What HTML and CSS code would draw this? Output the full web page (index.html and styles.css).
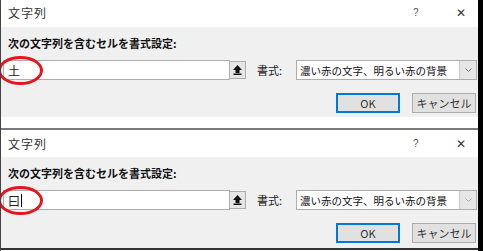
FILE: index.html
```html
<!doctype html>
<html>
<head>
<meta charset="utf-8">
<link rel="stylesheet" href="styles.css">
<title>文字列</title>
</head>
<body>
<div class="shot">

<div class="dialog first">
  <div class="titlebar">
    <span class="title">文字列</span>
    <span class="help">?</span>
    <span class="close">&#x2715;</span>
  </div>
  <div class="panel">
    <p class="label">次の文字列を含むセルを書式設定:</p>
    <div class="row">
      <div class="input"><span class="value">土</span></div>
      <div class="pick"><svg width="9" height="10" viewBox="0 0 9 10"><path d="M4.5 0 L9 5 H6.5 V8 H2.5 V5 H0 Z" fill="#111"/><rect x="0.5" y="8.5" width="8" height="1.5" fill="#111"/></svg></div>
      <span class="fmt">書式:</span>
      <div class="select">
        <span class="sel-text">濃い赤の文字、明るい赤の背景</span>
        <span class="arrow"><svg width="7" height="4" viewBox="0 0 7 4"><path d="M0.5 0.5 L3.5 3.5 L6.5 0.5" fill="none" stroke="#777" stroke-width="1"/></svg></span>
      </div>
    </div>
    <div class="buttons">
      <button class="btn default">OK</button>
      <button class="btn">キャンセル</button>
    </div>
    <div class="mark"></div>
  </div>
</div>

<div class="gap"></div>

<div class="dialog second">
  <div class="titlebar">
    <span class="title">文字列</span>
    <span class="help">?</span>
    <span class="close">&#x2715;</span>
  </div>
  <div class="panel">
    <p class="label">次の文字列を含むセルを書式設定:</p>
    <div class="row">
      <div class="input"><span class="value">曰</span><span class="caret"></span></div>
      <div class="pick"><svg width="9" height="10" viewBox="0 0 9 10"><path d="M4.5 0 L9 5 H6.5 V8 H2.5 V5 H0 Z" fill="#111"/><rect x="0.5" y="8.5" width="8" height="1.5" fill="#111"/></svg></div>
      <span class="fmt">書式:</span>
      <div class="select">
        <span class="sel-text">濃い赤の文字、明るい赤の背景</span>
        <span class="arrow"><svg width="7" height="4" viewBox="0 0 7 4"><path d="M0.5 0.5 L3.5 3.5 L6.5 0.5" fill="none" stroke="#aaa" stroke-width="1"/></svg></span>
      </div>
    </div>
    <div class="buttons">
      <button class="btn default">OK</button>
      <button class="btn">キャンセル</button>
    </div>
    <div class="mark"></div>
  </div>
</div>

</div>
</body>
</html>
```

FILE: styles.css
```css
html,
body {
    margin: 0;
    padding: 0;
    background: #fff;
}
body {
    font-family: "Noto Sans CJK JP", "Liberation Sans", sans-serif;
    font-size: 11px;
    color: #222;
}
p {
    margin: 0;
}
.shot {
    width: 483px;
    height: 251px;
    box-sizing: border-box;
    border-right: 5px solid #000;
    border-left: 1px solid #444;
    overflow: hidden;
}
.dialog {
    background: #fff;
}
.first {
    margin-top: -2px;
}
.second {
    border-top: 2px solid #7a7a7a;
    border-bottom: 2px solid #333;
}
.gap {
    height: 11px;
    background: #fff;
}
.titlebar {
    height: 27px;
    display: flex;
    align-items: center;
    padding-left: 7px;
    background: #fff;
}
.first .titlebar {
    height: 29px;
}
.title {
    font-size: 12px;
    color: #333;
    flex: 1;
    letter-spacing: 1px;
}
.help {
    font-family: "Liberation Sans", sans-serif;
    font-size: 10px;
    color: #555;
    width: 43px;
}
.close {
    font-family: "DejaVu Sans", sans-serif;
    font-size: 12px;
    color: #333;
    width: 22px;
}
.panel {
    position: relative;
    background: #f0f0f0;
    height: 90px;
    padding: 8px 0 0 2px;
    box-sizing: border-box;
}
.second .panel {
    height: 91px;
}
.label {
    font-weight: bold;
    font-size: 11px;
    line-height: 16px;
    padding-left: 5px;
    color: #111;
}
.row {
    display: flex;
    align-items: center;
    margin-top: 9px;
    height: 20px;
}
.input {
    width: 227px;
    height: 20px;
    box-sizing: border-box;
    border: 1px solid #adadad;
    background: #fff;
    display: flex;
    align-items: center;
    padding-left: 4px;
    font-size: 12px;
}
.caret {
    width: 1px;
    height: 13px;
    background: #000;
    margin-left: 1px;
}
.pick {
    width: 16px;
    height: 18px;
    box-sizing: border-box;
    border: 1px solid #adadad;
    border-left: none;
    background: #e6e6e6;
    display: flex;
    align-items: center;
    justify-content: center;
}
.fmt {
    margin-left: 11px;
    width: 39px;
    font-size: 11px;
    color: #222;
}
.select {
    width: 181px;
    height: 20px;
    box-sizing: border-box;
    border: 1px solid #adadad;
    background: #fff;
    display: flex;
    align-items: center;
    padding-left: 3px;
}
.sel-text {
    flex: 1;
    font-size: 10.5px;
    color: #111;
}
.arrow {
    width: 16px;
    height: 18px;
    background: #e6e6e6;
    border-left: 1px solid #ccc;
    display: flex;
    align-items: center;
    justify-content: center;
}
.buttons {
    display: flex;
    justify-content: flex-end;
    gap: 12px;
    margin-top: 13px;
    padding-right: 2px;
}
.btn {
    width: 64px;
    height: 20px;
    padding: 0;
    border: 1px solid #adadad;
    background: #e1e1e1;
    font-family: "Noto Sans CJK JP", "Liberation Sans", sans-serif;
    font-size: 11px;
    color: #333;
}
.btn.default {
    border: 2px solid #0078d7;
}
.mark {
    position: absolute;
    left: -3px;
    top: 29px;
    width: 39px;
    height: 23px;
    border: 3px solid #e8141c;
    border-radius: 50%;
}
```
